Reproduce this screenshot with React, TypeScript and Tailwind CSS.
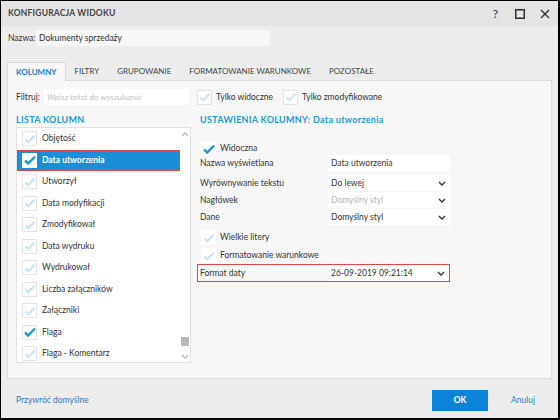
import React from 'react';

const FONT = "font-['Lato','Open_Sans',sans-serif]";

const Check: React.FC<{ state: 'off' | 'on'; white?: boolean }> = ({ state, white }) => (
  <div className={`w-[15px] h-[15px] shrink-0 flex items-center justify-center ${white ? 'bg-white' : 'bg-white border border-[#e3e3e3]'}`}>
    <svg width="12" height="10" viewBox="0 0 12 10">
      {state === 'on' ? (
        <path d="M1 5.5 L4.2 8.5 L11 1.5" fill="none" stroke="#1a97d5" strokeWidth="2.4" />
      ) : (
        <path d="M1.5 5.5 L4.4 8.3 L10.5 1.8" fill="none" stroke="#c5e5f4" strokeWidth="2.2" />
      )}
    </svg>
  </div>
);

const Chevron: React.FC<{ up?: boolean; color?: string }> = ({ up, color = '#333' }) => (
  <svg width="8" height="5" viewBox="0 0 8 5" className={up ? 'rotate-180' : ''}>
    <path d="M1 1 L4 4 L7 1" fill="none" stroke={color} strokeWidth="1.4" />
  </svg>
);

const columns: { name: string; on?: boolean; selected?: boolean }[] = [
  { name: 'Objętość' },
  { name: 'Data utworzenia', on: true, selected: true },
  { name: 'Utworzył' },
  { name: 'Data modyfikacji' },
  { name: 'Zmodyfikował' },
  { name: 'Data wydruku' },
  { name: 'Wydrukował' },
  { name: 'Liczba załączników' },
  { name: 'Załączniki' },
  { name: 'Flaga', on: true },
  { name: 'Flaga - Komentarz' },
];

const SettingRow: React.FC<{ label: string; value: string; select?: boolean; muted?: boolean; className?: string }> = ({ label, value, select, muted, className = 'mt-[1px]' }) => (
  <div className={`flex items-center h-[16px] ${className}`}>
    <div className="w-[128px] text-[8.5px] text-[#333]">{label}</div>
    <div className="flex-1 h-[16px] bg-white flex items-center pl-[3px] pr-[4px]">
      <span className={`flex-1 text-[8.5px] ${muted ? 'text-[#b5b5b5]' : 'text-[#333]'}`}>{value}</span>
      {select && <Chevron />}
    </div>
  </div>
);

export default function App() {
  const tabs = ['KOLUMNY', 'FILTRY', 'GRUPOWANIE', 'FORMATOWANIE WARUNKOWE', 'POZOSTAŁE'];
  return (
    <div className={`w-[560px] h-[420px] bg-[#ededed] border-t border-l border-r-2 border-b-2 border-black flex flex-col ${FONT} text-[#333] overflow-hidden`}>
      {/* title bar */}
      <div className="h-[25px] bg-[#e4e4e4] flex items-center pl-[7px] pr-[8px] shrink-0">
        <div className="flex-1 text-[8.5px] font-bold text-[#444] tracking-[0.2px]">KONFIGURACJA WIDOKU</div>
        <div className="flex items-center text-[#333]">
          <span className="text-[12px] leading-none">?</span>
          <svg width="10" height="10" viewBox="0 0 10 10" className="ml-[17px]"><rect x="0.75" y="0.75" width="8.5" height="8.5" fill="none" stroke="#333" strokeWidth="1.5" /></svg>
          <svg width="10" height="10" viewBox="0 0 10 10" className="ml-[15px]"><path d="M1 1 L9 9 M9 1 L1 9" stroke="#333" strokeWidth="1.4" /></svg>
        </div>
      </div>

      {/* name */}
      <div className="flex items-center pl-[7px] mt-[4px] h-[16px]">
        <span className="text-[8.5px] w-[28px]">Nazwa:</span>
        <div className="w-[234px] h-[16px] bg-[#f7f7f7] flex items-center pl-[3px] text-[8.5px]">Dokumenty sprzedaży</div>
      </div>

      {/* tabs */}
      <div className="flex items-end pl-[6px] mt-[16px] h-[18px]">
        {tabs.map((t, i) => (
          <div
            key={t}
            className={`h-[18px] flex items-center text-[8px] ${i === 0 ? 'px-[8px] bg-[#f7f7f7] border border-b-0 border-[#dadada] text-[#1a7cc0] font-bold relative z-10 h-[19px] -mb-[1px]' : 'px-[9px] text-[#444]'}`}
          >
            {t}
          </div>
        ))}
      </div>

      {/* panel */}
      <div className="mx-[6px] h-[299px] bg-[#f7f7f7] border border-[#dcdcdc] pl-[8px] pr-[3px] pt-[8px] flex flex-col">
        {/* filter row */}
        <div className="flex items-center h-[16px]">
          <span className="text-[8.5px] w-[28px]">Filtruj:</span>
          <div className="w-[145px] h-[16px] bg-white flex items-center pl-[3px] text-[8.5px] italic text-[#c2c2c2]">Wpisz tekst do wyszukania</div>
          <div className="ml-[8px] flex items-center gap-[4px]">
            <Check state="off" />
            <span className="text-[8.5px]">Tylko widoczne</span>
          </div>
          <div className="ml-[10px] flex items-center gap-[4px]">
            <Check state="off" />
            <span className="text-[8.5px]">Tylko zmodyfikowane</span>
          </div>
        </div>

        <div className="flex mt-[8px] flex-1">
          {/* list */}
          <div className="w-[175px] flex flex-col">
            <div className="text-[9px] font-bold text-[#1b9ad0] tracking-[0.3px] h-[14px] leading-[14px]">LISTA KOLUMN</div>
            <div className="h-[236px] bg-white border border-[#e2e2e2] flex relative overflow-hidden">
              <div className="flex-1 flex flex-col">
                {columns.map((c) => (
                  <div
                    key={c.name}
                    className={`h-[21.5px] shrink-0 flex items-center ${c.selected ? 'bg-[#1a8fd8] border border-[#e04848] pl-[4px] text-white font-bold' : 'pl-[5px]'}`}
                  >
                    <Check state={c.on ? 'on' : 'off'} white={c.selected} />
                    <span className="ml-[5px] text-[8.5px]">{c.name}</span>
                  </div>
                ))}
              </div>
              <div className="w-[10px] flex flex-col items-center pt-[4px] pb-[3px]">
                <Chevron up color="#bbb" />
                <div className="flex-1" />
                <div className="w-[8px] h-[9px] bg-[#b9b9b9]" />
                <div className="mt-[8px]"><Chevron color="#bbb" /></div>
              </div>
            </div>
          </div>

          {/* settings */}
          <div className="ml-[9px] w-[250px] flex flex-col">
            <div className="text-[9px] font-bold text-[#1b9ad0] tracking-[0.3px] h-[14px] leading-[14px]">USTAWIENIA KOLUMNY: Data utworzenia</div>
            <div className="flex items-center gap-[4px] mt-[14px] ml-[1px] h-[15px]">
              <Check state="on" white />
              <span className="text-[8.5px]">Widoczna</span>
            </div>
            <SettingRow label="Nazwa wyświetlana" value="Data utworzenia" className="mt-[-1px]" />
            <SettingRow label="Wyrównywanie tekstu" value="Do lewej" select className="mt-[4px]" />
            <SettingRow label="Nagłówek" value="Domyślny styl" select muted />
            <SettingRow label="Dane" value="Domyślny styl" select />
            <div className="flex items-center gap-[4px] mt-[5px] ml-[1px] h-[15px]">
              <Check state="off" white />
              <span className="text-[8.5px]">Wielkie litery</span>
            </div>
            <div className="flex items-center gap-[4px] mt-[3px] ml-[1px] h-[15px]">
              <Check state="off" white />
              <span className="text-[8.5px]">Formatowanie warunkowe</span>
            </div>
            <div className="mt-[1px] -ml-[3px] border border-[#e04848] pl-[2px] h-[18px] flex items-center">
              <div className="w-[128px] text-[8.5px]">Format daty</div>
              <div className="flex-1 h-[16px] bg-white flex items-center pl-[3px] pr-[4px]">
                <span className="flex-1 text-[8.5px]">26-09-2019 09:21:14</span>
                <Chevron />
              </div>
            </div>
          </div>
        </div>
      </div>

      {/* footer */}
      <div className="flex items-center h-[21px] mt-[11px] pl-[15px] pr-[23px]">
        <span className="flex-1 text-[8.5px] text-[#2a7ec0]">Przywróć domyślne</span>
        <div className="w-[56px] h-[21px] bg-[#0a84d8] text-white font-bold text-[8.5px] flex items-center justify-center">OK</div>
        <span className="ml-[23px] text-[8.5px] text-[#2a7ec0]">Anuluj</span>
      </div>
    </div>
  );
}
